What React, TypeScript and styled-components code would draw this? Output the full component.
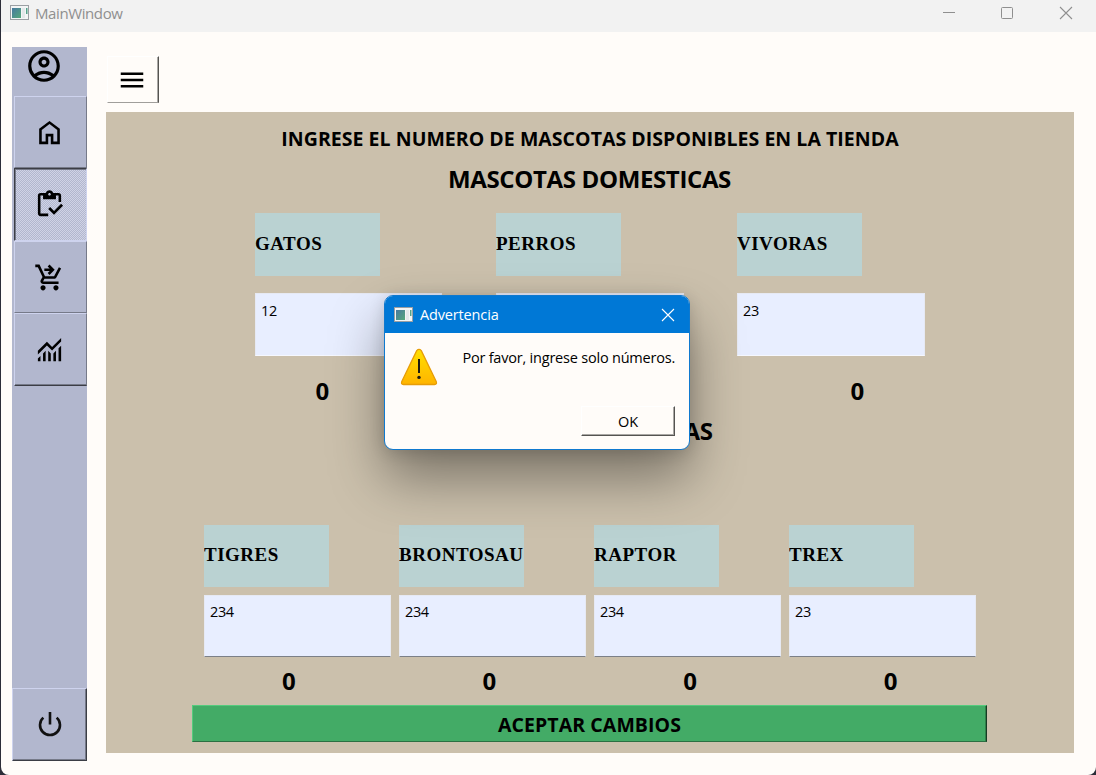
import React from "react";
import styled, { createGlobalStyle, css } from "styled-components";
import {
  MdMenu,
  MdOutlineAccountCircle,
  MdOutlineInventory,
  MdOutlineShoppingCartCheckout,
} from "react-icons/md";

const GlobalStyle = createGlobalStyle`
  *, *::before, *::after { box-sizing: border-box; }
  body {
    margin: 0;
    background: #15161c;
    color: #000;
    font-family: "Open Sans", "Noto Sans", sans-serif;
    overflow: hidden;
  }
  button { font: inherit; color: inherit; padding: 0; margin: 0; border-radius: 0; }
`;

const Desktop = styled.div`
  position: relative;
  height: 775px;
  padding-left: 1px;
  background: #2c2d38;
`;

const Window = styled.div`
  height: 100%;
  display: flex;
  flex-direction: column;
  background: #fffcf9;
  border-radius: 0 0 8px 8px;
  overflow: hidden;
`;

const TitleBar = styled.header`
  flex: none;
  height: 32px;
  display: flex;
  align-items: flex-start;
  background: #f2f2f2;
  color: #8f8f8f;
  padding: 4px 23px 0 9px;
`;

const WindowTitle = styled.span`
  flex: 1;
  margin: -1px 0 0 6px;
  font-size: 15px;
  line-height: 20px;
  letter-spacing: -0.4px;
`;

const WindowControls = styled.div`
  display: flex;
  gap: 45px;
  padding-top: 2px;
`;

const Body = styled.div`
  flex: 1;
  display: flex;
  padding: 15px 22px 0 11px;
  gap: 19px;
`;

const Sidebar = styled.nav`
  width: 75px;
  height: 714px;
  display: flex;
  flex-direction: column;
  background: #b2b7ce;
`;

const Account = styled.div`
  height: 49px;
  padding-left: 13px;
  svg { display: block; }
`;

const NavGroup = styled.div`
  flex: 1;
  display: grid;
  grid-template-rows: 72px 73px 72px 73px;
  padding-left: 2px;
`;

const raised = css`
  border: 1px solid;
  border-color: #ced3ee #767a89 #767a89 #ced3ee;
`;

const sunken = css`
  border: 1px solid;
  border-color: #3b3d45 #ced3ee #ced3ee #3b3d45;
  box-shadow: inset 1px 1px 0 #767a89;
  background: repeating-conic-gradient(#b2b7ce 0 25%, #d0d3e6 0 50%) 0 0 / 2px 2px;
`;

const NavButton = styled.button<{ $active?: boolean; $last?: boolean }>`
  display: flex;
  align-items: center;
  justify-content: center;
  width: 73px;
  padding-right: 2px;
  background: #b2b7ce;
  ${(p) => (p.$active ? sunken : raised)}
  ${(p) => p.$last && css`border-bottom: 1px solid #3b3d45; box-shadow: inset 0 -1px 0 #767a89;`}
`;

const PowerButton = styled.button`
  display: flex;
  align-items: center;
  justify-content: center;
  height: 73px;
  padding-bottom: 2px;
  background: #b2b7ce;
  border: 1px solid;
  border-color: #ced3ee #3b3d45 #3b3d45 #ced3ee;
  box-shadow: inset -1px -1px 0 #767a89;
`;

const Main = styled.main`
  flex: 1;
  padding-top: 9px;
`;

const MenuButton = styled.button`
  display: flex;
  align-items: center;
  justify-content: center;
  width: 52px;
  height: 47px;
  margin-left: 1px;
  padding: 0 2px 0 0;
  background: #fffcf9;
  border: 1px solid;
  border-color: #fff #555452 #a09e9b #fff;
  box-shadow: inset -1px 0 0 #aaa8a5;
`;

const Panel = styled.section`
  width: 968px;
  height: 641px;
  margin-top: 9px;
  padding-top: 15px;
  background: #cbc0ac;
  display: flex;
  flex-direction: column;
`;

const Question = styled.h2`
  margin: 0;
  font-size: 19.5px;
  font-weight: 700;
  line-height: 24px;
  letter-spacing: 0.04px;
  text-align: center;
  white-space: nowrap;
`;

const SectionTitle = styled.h1<{ $top: number }>`
  margin: ${(p) => p.$top}px 0 0;
  padding-right: 1px;
  font-size: 24px;
  font-weight: 700;
  line-height: 32px;
  letter-spacing: -0.36px;
  text-align: center;
  white-space: nowrap;
`;

const PetRow = styled.div<{ $left: number; $pitch: number; $columns: number; $top: number }>`
  display: grid;
  grid-template-columns: repeat(${(p) => p.$columns}, ${(p) => p.$pitch}px);
  margin: ${(p) => p.$top}px 0 0 ${(p) => p.$left}px;
`;

const PetField = styled.div<{ $gap: number }>`
  display: flex;
  flex-direction: column;
  gap: ${(p) => p.$gap}px;
`;

const PetName = styled.div<{ $height: number }>`
  width: 125px;
  height: ${(p) => p.$height}px;
  overflow: hidden;
  background: #bad2d2;
  font: 700 19px/${(p) => (p.$height === 63 ? 62 : 59)}px "Liberation Serif", serif;
  letter-spacing: 0.5px;
  white-space: nowrap;
`;

const PetInput = styled.div<{ $width: number; $height: number; $underline?: boolean }>`
  width: ${(p) => p.$width}px;
  height: ${(p) => p.$height}px;
  padding: ${(p) => (p.$underline ? 6 : 7)}px 5px;
  background: #e8eeff;
  border: 1px solid #e6e9f3;
  border-bottom-color: ${(p) => (p.$underline ? "#7c8088" : "#f6f8ff")};
  font-size: 14.5px;
  line-height: 20px;
  letter-spacing: -0.4px;
`;

const Totals = styled.div<{ $columns: number; $top: number }>`
  display: grid;
  grid-template-columns: repeat(${(p) => p.$columns}, 1fr);
  width: 802.5px;
  margin: ${(p) => p.$top}px 0 0 82.5px;
  font-size: 24px;
  font-weight: 700;
  line-height: 30px;
  text-align: center;
`;

const AcceptButton = styled.button`
  width: 795px;
  height: 37px;
  margin: 9px 0 0 86px;
  padding-top: 2px;
  background: #43ab66;
  border: 1px solid;
  border-color: #55cb7d #173b23 #2b6f42 #55cb7d;
  box-shadow: inset -1px 0 0 #2f8049;
  font-size: 19.5px;
  font-weight: 700;
  letter-spacing: 0.08px;
`;

const Dialog = styled.div`
  position: absolute;
  left: 384px;
  top: 295px;
  width: 306px;
  height: 155px;
  display: flex;
  flex-direction: column;
  overflow: hidden;
  background: #fffcf9;
  border: 1px solid #0f79cf;
  border-radius: 9px;
  box-shadow: 0 28px 54px rgba(0, 0, 0, 0.4), 0 2px 16px rgba(0, 0, 0, 0.14);
`;

const DialogTitle = styled.div`
  flex: none;
  display: flex;
  align-items: center;
  height: 37px;
  padding: 0 14px 0 9px;
  background: #0078d6;
  color: #fff;
  font-size: 14.5px;
  span { flex: 1; margin-left: 7px; letter-spacing: -0.15px; }
`;

const DialogContent = styled.div`
  flex: 1;
  display: flex;
  justify-content: space-between;
  padding: 15px 14px 0 15px;
`;

const Message = styled.p`
  margin: 0;
  font-size: 14.5px;
  line-height: 20px;
  letter-spacing: -0.21px;
  white-space: nowrap;
`;

const DialogActions = styled.div`
  display: flex;
  justify-content: flex-end;
  padding: 0 14px 13px 0;
`;

const OkButton = styled.button`
  width: 94px;
  height: 30px;
  background: #fffcf9;
  border: 1px solid;
  border-color: #fff #555452 #555452 #fff;
  box-shadow: inset -1px -1px 0 #aaa8a5;
  font-size: 14.5px;
  letter-spacing: -0.2px;
`;

function AppIcon() {
  return (
    <svg width="19" height="17" viewBox="0 0 19 17">
      <defs>
        <linearGradient id="pane" x1="0" y1="0" x2="1" y2="1">
          <stop offset="0" stopColor="#4779a0" />
          <stop offset="1" stopColor="#55a87a" />
        </linearGradient>
      </defs>
      <rect x="0.5" y="1.5" width="18" height="14" fill="#f3f5f5" stroke="#9b9fa3" />
      <rect x="2" y="4" width="9" height="10" fill="url(#pane)" />
      <rect x="12" y="4" width="3" height="10" fill="#e3e8ea" />
      <rect x="16" y="4" width="1.5" height="6" fill="#55a28a" />
    </svg>
  );
}

function Cross({ color }: { color: string }) {
  return (
    <svg width="14" height="14" viewBox="0 0 14 14">
      <path d="M1 1 13 13M13 1 1 13" fill="none" stroke={color} strokeWidth="1.1" />
    </svg>
  );
}

function SymbolIcon({ d }: { d: string }) {
  return (
    <svg width="31" height="31" viewBox="0 -960 960 960">
      <path d={d} />
    </svg>
  );
}

const homePath =
  "M240-200h120v-240h240v240h120v-360L480-740 240-560v360Zm-80 80v-480l320-240 320 240v480H520v-240h-80v240H160Z";
const chartPath =
  "M120-120v-80l80-80v160h-80Zm160 0v-240l80-80v320h-80Zm160 0v-320l80 81v239h-80Zm160 0v-239l80-80v319h-80Zm160 0v-400l80-80v480h-80ZM120-327v-113l280-280 160 160 280-280v113L560-447 400-607 120-327Z";

function PowerIcon() {
  return (
    <svg width="26" height="26" viewBox="0 0 26 26">
      <path
        d="M6.3 6.6A10 10 0 1 0 19.7 6.6M13 1v12.5"
        fill="none"
        stroke="#111"
        strokeWidth="2.6"
      />
    </svg>
  );
}

function WarningIcon() {
  return (
    <svg width="38" height="38" viewBox="0 0 38 38">
      <defs>
        <linearGradient id="warn" x1="0" y1="0" x2="0" y2="1">
          <stop offset="0" stopColor="#ffe000" />
          <stop offset="1" stopColor="#ffb400" />
        </linearGradient>
      </defs>
      <path
        d="M16.7 2.6Q19 .2 21.3 2.6L36.2 33.4Q37.3 36.5 34.5 36.5H3.5Q.7 36.5 1.8 33.4Z"
        fill="url(#warn)"
        stroke="#e79d08"
        strokeWidth="1.3"
      />
      <path d="M19 11v14" stroke="#1c1a10" strokeWidth="2" />
      <circle cx="19" cy="29.4" r="1.7" fill="#1c1a10" />
    </svg>
  );
}

const domestic = [
  { name: "GATOS", value: "12", width: 187 },
  { name: "PERROS", value: "", width: 188 },
  { name: "VIVORAS", value: "23", width: 188 },
];

const exotic = [
  { name: "TIGRES", value: "234" },
  { name: "BRONTOSAU", value: "234" },
  { name: "RAPTOR", value: "234" },
  { name: "TREX", value: "23" },
];

export default function App() {
  return (
    <Desktop>
      <GlobalStyle />
      <Window>
        <TitleBar>
          <AppIcon />
          <WindowTitle>MainWindow</WindowTitle>
          <WindowControls>
            <svg width="14" height="14" viewBox="0 0 14 14">
              <path d="M2 6.5h12" stroke="#8f8f8f" />
            </svg>
            <svg width="14" height="14" viewBox="0 0 14 14">
              <rect x="1.5" y="1.5" width="11" height="11" rx="1" fill="none" stroke="#8f8f8f" />
            </svg>
            <Cross color="#8f8f8f" />
          </WindowControls>
        </TitleBar>
        <Body>
          <Sidebar>
            <Account>
              <MdOutlineAccountCircle size={38} />
            </Account>
            <NavGroup>
              <NavButton><SymbolIcon d={homePath} /></NavButton>
              <NavButton $active><MdOutlineInventory size={31} /></NavButton>
              <NavButton><MdOutlineShoppingCartCheckout size={31} /></NavButton>
              <NavButton $last><SymbolIcon d={chartPath} /></NavButton>
            </NavGroup>
            <PowerButton><PowerIcon /></PowerButton>
          </Sidebar>
          <Main>
            <MenuButton><MdMenu size={30} /></MenuButton>
            <Panel>
              <Question>INGRESE EL NUMERO DE MASCOTAS DISPONIBLES EN LA TIENDA</Question>
              <SectionTitle $top={12}>MASCOTAS DOMESTICAS</SectionTitle>
              <PetRow $columns={3} $pitch={241} $left={149} $top={18}>
                {domestic.map((pet) => (
                  <PetField key={pet.name} $gap={17}>
                    <PetName $height={63}>{pet.name}</PetName>
                    <PetInput $width={pet.width} $height={63}>{pet.value}</PetInput>
                  </PetField>
                ))}
              </PetRow>
              <Totals $columns={3} $top={20}>
                {domestic.map((pet) => <span key={pet.name}>0</span>)}
              </Totals>
              <SectionTitle $top={9}>MASCOTAS EXOTICAS</SectionTitle>
              <PetRow $columns={4} $pitch={195} $left={98} $top={78}>
                {exotic.map((pet) => (
                  <PetField key={pet.name} $gap={8}>
                    <PetName $height={62}>{pet.name}</PetName>
                    <PetInput $width={187} $height={62} $underline>{pet.value}</PetInput>
                  </PetField>
                ))}
              </PetRow>
              <Totals $columns={4} $top={9}>
                {exotic.map((pet) => <span key={pet.name}>0</span>)}
              </Totals>
              <AcceptButton>ACEPTAR CAMBIOS</AcceptButton>
            </Panel>
          </Main>
        </Body>
      </Window>
      <Dialog role="dialog">
        <DialogTitle>
          <AppIcon />
          <span>Advertencia</span>
          <Cross color="#fff" />
        </DialogTitle>
        <DialogContent>
          <WarningIcon />
          <Message>Por favor, ingrese solo números.</Message>
        </DialogContent>
        <DialogActions>
          <OkButton>OK</OkButton>
        </DialogActions>
      </Dialog>
    </Desktop>
  );
}
